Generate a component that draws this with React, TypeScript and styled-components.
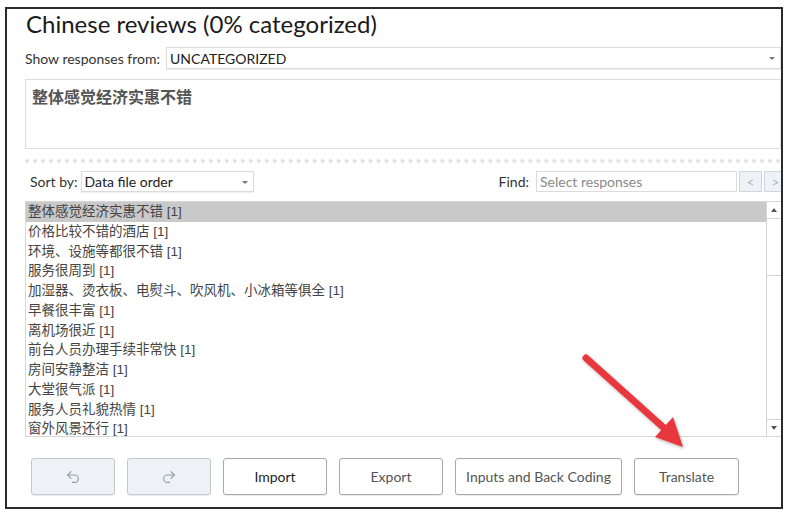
import React from "react";
import styled, { createGlobalStyle } from "styled-components";
import { Undo2, Redo2 } from "lucide-react";

const GlobalStyle = createGlobalStyle`
	html, body {
		margin: 0;
		padding: 0;
		background: #ffffff;
	}
	body {
		font-family: Lato, "Liberation Sans", "Noto Sans CJK SC", sans-serif;
		color: #222;
	}
`;

const UI_FONT = `Lato, "Liberation Sans", "Noto Sans CJK SC", sans-serif`;
const CJK_FONT = `"Liberation Sans", "Noto Sans CJK SC", sans-serif`;

const Page = styled.div`
	padding: 7px 0 0 5px;
`;

const Frame = styled.div`
	position: relative;
	width: 756px;
	height: 498px;
	border: 2px solid #2b2b2b;
	overflow: hidden;
	display: flex;
	flex-direction: column;
	padding-left: 18px;
	box-sizing: content-box;
`;

const Title = styled.h1`
	margin: 0;
	padding-left: 1px;
	font-family: ${UI_FONT};
	font-weight: 400;
	font-size: 24px;
	line-height: 30px;
	color: #1a1a1a;
`;

const FieldRow = styled.div<{ $top: number; $indent?: number; $overhang?: number }>`
	display: flex;
	align-items: center;
	margin-top: ${(p) => p.$top}px;
	margin-right: ${(p) => -(p.$overhang || 0)}px;
	padding-left: ${(p) => p.$indent || 0}px;
	font-family: ${UI_FONT};
	font-size: 14px;
	color: #333;
`;

const Label = styled.span<{ $gap: number }>`
	margin-right: ${(p) => p.$gap}px;
	white-space: nowrap;
`;

const Select = styled.div<{ $width?: number; $height: number }>`
	position: relative;
	box-sizing: border-box;
	${(p) => (p.$width ? `width: ${p.$width}px;` : "flex: 1;")}
	height: ${(p) => p.$height}px;
	border: 1px solid #dcdcdc;
	box-shadow: 0 1px 1px rgba(0, 0, 0, 0.06);
	background: #fff;
	display: flex;
	align-items: center;
	padding-left: 3px;
	font-size: 14px;
	color: #222;
	&::after {
		content: "";
		position: absolute;
		right: 5px;
		top: 50%;
		margin-top: -1px;
		border-left: 3px solid transparent;
		border-right: 3px solid transparent;
		border-top: 3px solid #777;
	}
`;

const SpacerFlex = styled.div`
	flex: 1;
`;

const FindInput = styled.div`
	box-sizing: border-box;
	width: 201px;
	height: 21px;
	border: 1px solid #dcdcdc;
	display: flex;
	align-items: center;
	padding-left: 3px;
	color: #8a8a8a;
	font-size: 14px;
	flex-shrink: 0;
`;

const NavButton = styled.div`
	box-sizing: border-box;
	width: 23px;
	height: 21px;
	margin-left: 2px;
	border: 1px solid #cfd6e0;
	background: #eef2f7;
	color: #a8b0bb;
	font-size: 13px;
	display: flex;
	align-items: center;
	justify-content: center;
	flex-shrink: 0;
`;

const QuoteBox = styled.div`
	box-sizing: border-box;
	margin-top: 10px;
	height: 70px;
	border: 1px solid #dedede;
	padding: 8px 6px;
	font-family: ${CJK_FONT};
	font-weight: 700;
	font-size: 16px;
	line-height: 20px;
	color: #555;
`;

const Separator = styled.div`
	margin-top: 10px;
	height: 0;
	border-top: 4px dotted #e2e2e2;
`;

const ListBox = styled.div`
	margin-top: 9px;
	height: 236px;
	box-sizing: border-box;
	border: 1px solid #d8d8d8;
	border-right: none;
	display: flex;
`;

const Rows = styled.div`
	flex: 1;
	overflow: hidden;
`;

const Row = styled.div<{ $selected?: boolean }>`
	height: 19.75px;
	line-height: 19.75px;
	padding-left: 2px;
	font-family: ${CJK_FONT};
	font-size: 13.5px;
	color: #444;
	white-space: nowrap;
	background: ${(p) => (p.$selected ? "#c9c9c9" : "transparent")};
`;

const ScrollBar = styled.div`
	width: 14px;
	display: flex;
	flex-direction: column;
	border-left: 1px solid #d4d4d4;
`;

const ScrollArrow = styled.div<{ $up?: boolean }>`
	height: 16px;
	display: flex;
	align-items: center;
	justify-content: center;
	border-bottom: ${(p) => (p.$up ? "1px solid #d4d4d4" : "none")};
	border-top: ${(p) => (p.$up ? "none" : "1px solid #d4d4d4")};
	&::before {
		content: "";
		border-left: 3px solid transparent;
		border-right: 3px solid transparent;
		${(p) =>
			p.$up ? "border-bottom: 4px solid #555;" : "border-top: 4px solid #555;"}
	}
`;

const Thumb = styled.div`
	height: 56px;
	border-bottom: 1px solid #d4d4d4;
	background: #fff;
`;

const Track = styled.div`
	flex: 1;
`;

const ButtonBar = styled.div`
	margin-top: 21px;
	padding-left: 6px;
	display: flex;
	gap: 12px;
`;

const Button = styled.div<{ $width: number; $disabled?: boolean; $strong?: boolean }>`
	box-sizing: border-box;
	width: ${(p) => p.$width}px;
	height: 37px;
	border-radius: 3px;
	border: 1px solid ${(p) => (p.$disabled ? "#c4c9d0" : "#a9a9a9")};
	background: ${(p) => (p.$disabled ? "#eef1f6" : "#fff")};
	box-shadow: 0 1px 1px rgba(0, 0, 0, 0.08);
	display: flex;
	align-items: center;
	justify-content: center;
	font-family: ${UI_FONT};
	font-size: 14px;
	color: ${(p) => (p.$strong ? "#1e1e1e" : "#555")};
`;

const ArrowOverlay = styled.svg`
	position: absolute;
	left: 0;
	top: 0;
	pointer-events: none;
`;

const responses = [
	"整体感觉经济实惠不错",
	"价格比较不错的酒店",
	"环境、设施等都很不错",
	"服务很周到",
	"加湿器、烫衣板、电熨斗、吹风机、小冰箱等俱全",
	"早餐很丰富",
	"离机场很近",
	"前台人员办理手续非常快",
	"房间安静整洁",
	"大堂很气派",
	"服务人员礼貌热情",
	"窗外风景还行",
];

export default function App() {
	return (
		<>
			<GlobalStyle />
			<Page>
				<Frame>
					<Title>Chinese reviews (0% categorized)</Title>

					<FieldRow $top={8}>
						<Label $gap={6}>Show responses from:</Label>
						<Select $height={22}>UNCATEGORIZED</Select>
					</FieldRow>

					<QuoteBox>整体感觉经济实惠不错</QuoteBox>

					<Separator />

					<FieldRow $top={8} $indent={5} $overhang={6}>
						<Label $gap={3}>Sort by:</Label>
						<Select $width={173} $height={21}>
							Data file order
						</Select>
						<SpacerFlex />
						<Label $gap={7}>Find:</Label>
						<FindInput>Select responses</FindInput>
						<NavButton>&lt;</NavButton>
						<NavButton>&gt;</NavButton>
					</FieldRow>

					<ListBox>
						<Rows>
							{responses.map((text, i) => (
								<Row key={i} $selected={i === 0}>
									{text} [1]
								</Row>
							))}
						</Rows>
						<ScrollBar>
							<ScrollArrow $up />
							<Thumb />
							<Track />
							<ScrollArrow />
						</ScrollBar>
					</ListBox>

					<ButtonBar>
						<Button $width={84} $disabled>
							<Undo2 size={16} color="#949ea9" strokeWidth={1.7} />
						</Button>
						<Button $width={84} $disabled>
							<Redo2 size={16} color="#949ea9" strokeWidth={1.7} />
						</Button>
						<Button $width={104} $strong>
							Import
						</Button>
						<Button $width={104}>Export</Button>
						<Button $width={167}>Inputs and Back Coding</Button>
						<Button $width={105}>Translate</Button>
					</ButtonBar>
				</Frame>

				<ArrowOverlay width={788} height={512} viewBox="0 0 788 512">
					<defs>
						<filter id="arrowShadow" x="-20%" y="-20%" width="140%" height="140%">
							<feDropShadow dx="1" dy="1.5" stdDeviation="1.5" floodColor="#000" floodOpacity="0.3" />
						</filter>
					</defs>
					<g filter="url(#arrowShadow)">
						<line
							x1={586}
							y1={358}
							x2={664}
							y2={428}
							stroke="#e8383d"
							strokeWidth={7}
							strokeLinecap="round"
						/>
						<polygon points="683,447 655,437 673,417" fill="#e8383d" />
					</g>
				</ArrowOverlay>
			</Page>
		</>
	);
}
